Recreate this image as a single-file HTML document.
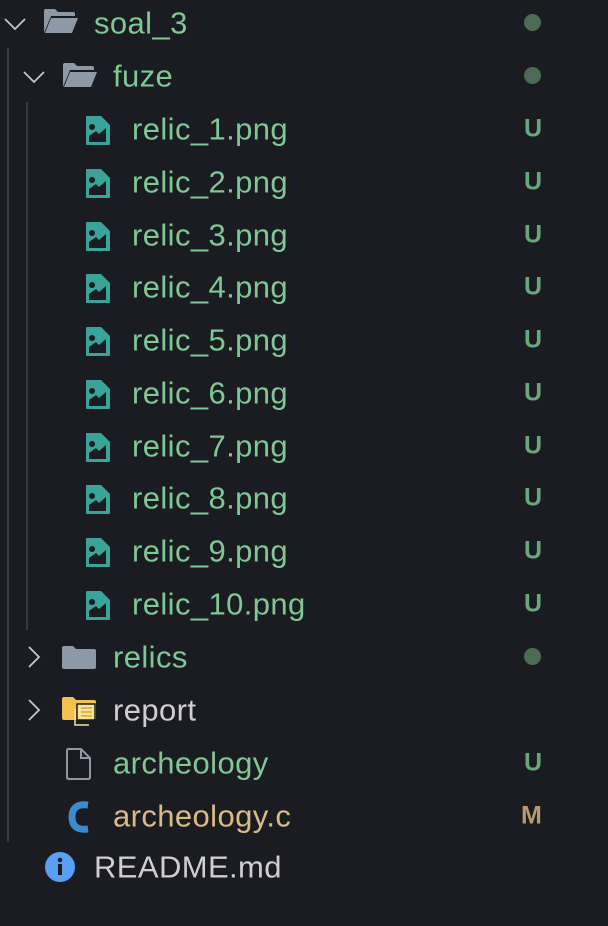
<!DOCTYPE html>
<html><head><style>
html,body{margin:0;padding:0;background:#1b1c21;width:608px;height:926px;overflow:hidden;font-family:"Liberation Sans",sans-serif;}
.r{position:absolute;left:0;width:608px;height:52px;}
.t{position:absolute;top:50%;transform:translateY(-50%);font-size:31px;letter-spacing:0.4px;line-height:1;color:#7fc795;white-space:nowrap;}
.b{position:absolute;left:524px;top:50%;transform:translateY(-50%);font-size:25px;font-weight:bold;color:#6aa57c;}
.d{position:absolute;left:524px;top:50%;margin-top:-9px;width:17px;height:17px;border-radius:50%;background:#4b6b55;}
svg{position:absolute;}
.l{position:absolute;width:2px;background:#3a3b40;}
.ic{left:85px;top:12px}
</style></head><body>
<div class="l" style="left:7px;top:48px;height:794px"></div>
<div class="l" style="left:26px;top:102px;height:528px"></div>

<div class="r" style="top:-3px">
<svg style="left:3px;top:15px" width="24" height="24" viewBox="0 0 24 24"><path d="M2 7l10 10 10-10" fill="none" stroke="#c5c5c5" stroke-width="1.8"/></svg>
<svg style="left:43px;top:11px" width="36" height="26" viewBox="0 0 36 26"><path d="M1 3Q1 1 3 1h9l3 3h15q2 0 2 2v2H8L1 25z" fill="#8d99a6"/><path d="M8 10h27l-6 15H2z" fill="#8d99a6"/></svg>
<div class="t" style="left:94px">soal_3</div><div class="d"></div></div>

<div class="r" style="top:50px">
<svg style="left:22px;top:15px" width="24" height="24" viewBox="0 0 24 24"><path d="M2 7l10 10 10-10" fill="none" stroke="#c5c5c5" stroke-width="1.8"/></svg>
<svg style="left:62px;top:12px" width="36" height="26" viewBox="0 0 36 26"><path d="M1 3Q1 1 3 1h9l3 3h15q2 0 2 2v2H8L1 25z" fill="#8d99a6"/><path d="M8 10h27l-6 15H2z" fill="#8d99a6"/></svg>
<div class="t" style="left:113px">fuze</div><div class="d"></div></div>

<div class="r" style="top:103px"><svg class="ic" width="26" height="31" viewBox="0 0 26 31"><path d="M2 1h14l9 9v19q0 1-1 1H2q-1 0-1-1V2q0-1 1-1z" fill="#3aa39a"/><circle cx="7" cy="12" r="3" fill="#1b1c21"/><path d="M4 27V21l7-5 3 3 7-6v14z" fill="#1b1c21"/></svg><div class="t" style="left:132px">relic_1.png</div><div class="b">U</div></div>
<div class="r" style="top:156px"><svg class="ic" width="26" height="31" viewBox="0 0 26 31"><path d="M2 1h14l9 9v19q0 1-1 1H2q-1 0-1-1V2q0-1 1-1z" fill="#3aa39a"/><circle cx="7" cy="12" r="3" fill="#1b1c21"/><path d="M4 27V21l7-5 3 3 7-6v14z" fill="#1b1c21"/></svg><div class="t" style="left:132px">relic_2.png</div><div class="b">U</div></div>
<div class="r" style="top:209px"><svg class="ic" width="26" height="31" viewBox="0 0 26 31"><path d="M2 1h14l9 9v19q0 1-1 1H2q-1 0-1-1V2q0-1 1-1z" fill="#3aa39a"/><circle cx="7" cy="12" r="3" fill="#1b1c21"/><path d="M4 27V21l7-5 3 3 7-6v14z" fill="#1b1c21"/></svg><div class="t" style="left:132px">relic_3.png</div><div class="b">U</div></div>
<div class="r" style="top:261px"><svg class="ic" width="26" height="31" viewBox="0 0 26 31"><path d="M2 1h14l9 9v19q0 1-1 1H2q-1 0-1-1V2q0-1 1-1z" fill="#3aa39a"/><circle cx="7" cy="12" r="3" fill="#1b1c21"/><path d="M4 27V21l7-5 3 3 7-6v14z" fill="#1b1c21"/></svg><div class="t" style="left:132px">relic_4.png</div><div class="b">U</div></div>
<div class="r" style="top:314px"><svg class="ic" width="26" height="31" viewBox="0 0 26 31"><path d="M2 1h14l9 9v19q0 1-1 1H2q-1 0-1-1V2q0-1 1-1z" fill="#3aa39a"/><circle cx="7" cy="12" r="3" fill="#1b1c21"/><path d="M4 27V21l7-5 3 3 7-6v14z" fill="#1b1c21"/></svg><div class="t" style="left:132px">relic_5.png</div><div class="b">U</div></div>
<div class="r" style="top:367px"><svg class="ic" width="26" height="31" viewBox="0 0 26 31"><path d="M2 1h14l9 9v19q0 1-1 1H2q-1 0-1-1V2q0-1 1-1z" fill="#3aa39a"/><circle cx="7" cy="12" r="3" fill="#1b1c21"/><path d="M4 27V21l7-5 3 3 7-6v14z" fill="#1b1c21"/></svg><div class="t" style="left:132px">relic_6.png</div><div class="b">U</div></div>
<div class="r" style="top:420px"><svg class="ic" width="26" height="31" viewBox="0 0 26 31"><path d="M2 1h14l9 9v19q0 1-1 1H2q-1 0-1-1V2q0-1 1-1z" fill="#3aa39a"/><circle cx="7" cy="12" r="3" fill="#1b1c21"/><path d="M4 27V21l7-5 3 3 7-6v14z" fill="#1b1c21"/></svg><div class="t" style="left:132px">relic_7.png</div><div class="b">U</div></div>
<div class="r" style="top:472px"><svg class="ic" width="26" height="31" viewBox="0 0 26 31"><path d="M2 1h14l9 9v19q0 1-1 1H2q-1 0-1-1V2q0-1 1-1z" fill="#3aa39a"/><circle cx="7" cy="12" r="3" fill="#1b1c21"/><path d="M4 27V21l7-5 3 3 7-6v14z" fill="#1b1c21"/></svg><div class="t" style="left:132px">relic_8.png</div><div class="b">U</div></div>
<div class="r" style="top:525px"><svg class="ic" width="26" height="31" viewBox="0 0 26 31"><path d="M2 1h14l9 9v19q0 1-1 1H2q-1 0-1-1V2q0-1 1-1z" fill="#3aa39a"/><circle cx="7" cy="12" r="3" fill="#1b1c21"/><path d="M4 27V21l7-5 3 3 7-6v14z" fill="#1b1c21"/></svg><div class="t" style="left:132px">relic_9.png</div><div class="b">U</div></div>
<div class="r" style="top:578px"><svg class="ic" width="26" height="31" viewBox="0 0 26 31"><path d="M2 1h14l9 9v19q0 1-1 1H2q-1 0-1-1V2q0-1 1-1z" fill="#3aa39a"/><circle cx="7" cy="12" r="3" fill="#1b1c21"/><path d="M4 27V21l7-5 3 3 7-6v14z" fill="#1b1c21"/></svg><div class="t" style="left:132px">relic_10.png</div><div class="b">U</div></div>

<div class="r" style="top:631px">
<svg style="left:22px;top:14px" width="24" height="24" viewBox="0 0 24 24"><path d="M7 2l10 10-10 10" fill="none" stroke="#c5c5c5" stroke-width="1.8"/></svg>
<svg style="left:62px;top:14px" width="34" height="24" viewBox="0 0 34 24"><path d="M0 3Q0 1 2 1h9l3 3h18q2 0 2 2v16q0 2-2 2H2q-2 0-2-2z" fill="#8d99a6"/></svg>
<div class="t" style="left:113px">relics</div><div class="d"></div></div>

<div class="r" style="top:684px">
<svg style="left:22px;top:14px" width="24" height="24" viewBox="0 0 24 24"><path d="M7 2l10 10-10 10" fill="none" stroke="#c5c5c5" stroke-width="1.8"/></svg>
<svg style="left:62px;top:12px" width="36" height="32" viewBox="0 0 36 32"><path d="M0 3Q0 1 2 1h9l3 3h18q2 0 2 2v16q0 2-2 2H2q-2 0-2-2z" fill="#f1c04e"/><rect x="15" y="8" width="18" height="16" fill="#f7e39a" stroke="#1b1c21" stroke-width="1.5"/><path d="M19 12h11M19 16h11M19 20h11" stroke="#e5b544" stroke-width="2"/><path d="M13 13v16h14" fill="none" stroke="#f7e39a" stroke-width="1.5"/></svg>
<div class="t" style="left:113px;color:#cfcfcf">report</div></div>

<div class="r" style="top:737px">
<svg style="left:66px;top:11px" width="26" height="32" viewBox="0 0 26 32"><path d="M2 1h13l9 9v19q0 2-2 2H3q-2 0-2-2V3q0-2 1-2z" fill="none" stroke="#8d99a6" stroke-width="2"/><path d="M15 1v9h9" fill="none" stroke="#8d99a6" stroke-width="2"/></svg>
<div class="t" style="left:113px">archeology</div><div class="b">U</div></div>

<div class="r" style="top:790px">
<svg style="left:68px;top:11px" width="24" height="32" viewBox="0 0 24 32"><path d="M20 4Q4 2 4 16t16 12" fill="none" stroke="#3b8bd0" stroke-width="7"/></svg>
<div class="t" style="left:113px;color:#d9bb85">archeology.c</div><div class="b" style="color:#b89b6c;left:521px">M</div></div>

<div class="r" style="top:841px">
<svg style="left:44px;top:10px" width="32" height="32" viewBox="0 0 32 32"><circle cx="16" cy="16" r="15" fill="#5aa0f2"/><circle cx="16" cy="9" r="2.3" fill="#1b1c21"/><rect x="14" y="13" width="4" height="11" fill="#1b1c21"/></svg>
<div class="t" style="left:94px;color:#cfcfcf">README.md</div></div>
</body></html>
